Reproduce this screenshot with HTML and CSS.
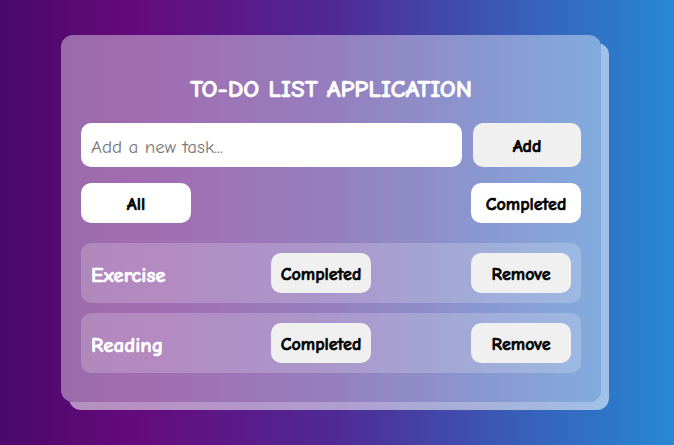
FILE: index.html
```html
<!DOCTYPE html>
<html lang="en">
<head>
<meta charset="utf-8">
<title>To-Do List Application</title>
<link rel="stylesheet" href="styles.css">
</head>
<body>
<main class="card">
  <h1 class="title">TO-DO LIST APPLICATION</h1>
  <div class="add-row">
    <input class="task-input" type="text" placeholder="Add a new task...">
    <button class="btn btn-add">Add</button>
  </div>
  <div class="filters">
    <button class="btn btn-filter">All</button>
    <button class="btn btn-filter">Completed</button>
  </div>
  <ul class="tasks">
    <li class="task">
      <span class="task-name">Exercise</span>
      <button class="btn btn-task">Completed</button>
      <button class="btn btn-task btn-remove">Remove</button>
    </li>
    <li class="task">
      <span class="task-name">Reading</span>
      <button class="btn btn-task">Completed</button>
      <button class="btn btn-task btn-remove">Remove</button>
    </li>
  </ul>
</main>
</body>
</html>
```

FILE: styles.css
```css
* { box-sizing: border-box; }
html, body { height: 100%; }
body {
  margin: 0;
  font-family: "Comic Sans MS", "Comic Neue", "DejaVu Sans", sans-serif;
  background: linear-gradient(to right, #4a086a 0%, #650a7c 20%, #4f2a95 50%, #3a5ab5 75%, #2788d4 100%);
  display: flex;
  justify-content: center;
  padding-top: 35px;
}
.card {
  width: 540px;
  height: 367px;
  padding: 0 20px;
  border-radius: 12px;
  background: rgba(255, 255, 255, 0.4);
  box-shadow: 8px 8px 0 rgba(255, 255, 255, 0.55);
  margin-left: -12px;
}
.title {
  margin: 42px 0 22px;
  text-align: center;
  color: #fff;
  font-size: 25px;
  font-weight: bold;
  line-height: 24px;
  -webkit-text-stroke: 0.6px #fff;
}
.add-row {
  display: flex;
  gap: 11px;
  height: 44px;
}
.task-input {
  flex: 1;
  border: none;
  border-radius: 10px;
  background: #fff;
  padding: 3px 10px 0;
  font-family: inherit;
  font-size: 19px;
  color: #333;
  outline: none;
}
.task-input::placeholder { color: #777; }
.btn {
  border: none;
  border-radius: 10px;
  font-family: inherit;
  font-weight: bold;
  color: #000;
  cursor: pointer;
  -webkit-text-stroke: 0.6px #000;
  padding: 3px 0 0;
}
.btn-add {
  width: 108px;
  background: #f0f0f0;
  font-size: 18px;
}
.filters {
  display: flex;
  justify-content: space-between;
  margin-top: 16px;
}
.btn-filter {
  width: 110px;
  height: 40px;
  background: #fff;
  font-size: 18px;
}
.tasks {
  list-style: none;
  margin: 20px 0 0;
  padding: 0;
  display: flex;
  flex-direction: column;
  gap: 10px;
}
.task {
  display: flex;
  align-items: center;
  height: 60px;
  padding: 0 10px;
  border-radius: 10px;
  background: rgba(255, 255, 255, 0.2);
}
.task-name {
  width: 180px;
  padding-top: 4px;
  color: #fff;
  font-weight: bold;
  font-size: 21px;
  -webkit-text-stroke: 0.6px #fff;
}
.btn-task {
  width: 100px;
  height: 40px;
  background: #f0f0f0;
  font-size: 18px;
}
.btn-remove { margin-left: auto; }
```
